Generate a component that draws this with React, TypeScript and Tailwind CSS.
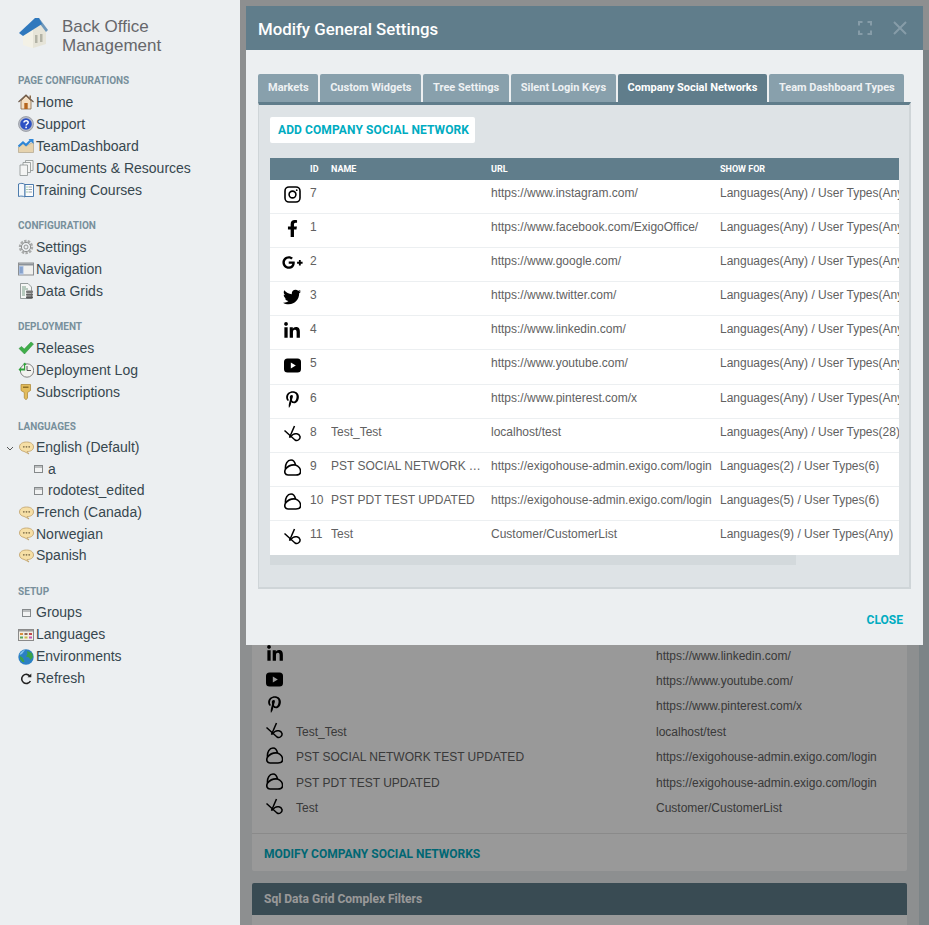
import React from 'react';
import { FaFacebookF, FaGooglePlusG, FaTwitter, FaLinkedinIn, FaPinterestP } from 'react-icons/fa';

const Logo = () => (
  <svg width="32" height="32" viewBox="0 0 32 32">
    <path d="M5 18 L22 7 L28 14 V27 L14 31 L5 28 Z" fill="#f3f1e6" />
    <path d="M15 31 L28 27 V14 L22 7 L15 12 Z" fill="#e6e4d8" />
    <rect x="17" y="18" width="2.5" height="8" fill="#b3b3a6" />
    <rect x="22" y="17" width="2.5" height="8" fill="#b3b3a6" />
    <path d="M21 1 L30 13 L28 15 L22 7 Z" fill="#6d97bb" />
    <path d="M1 16 L17 1 L21 1 L24 7 L5 19 Z" fill="#2f78bd" />
  </svg>
);

const HomeIcon = () => (
  <svg width="16" height="16" viewBox="0 0 16 16">
    <path d="M3 7 L8 2 L13 7 V15 H3 Z" fill="#f3dfc4" stroke="#8b6a4a" strokeWidth=".8" />
    <path d="M0.5 8 L8 1 L15.5 8" fill="none" stroke="#6d5a4a" strokeWidth="1.2" />
    <rect x="6.3" y="9" width="3.4" height="6" fill="#b5651d" />
    <rect x="11.5" y="1.5" width="1.5" height="3" fill="#8b6a4a" />
  </svg>
);
const SupportIcon = () => (
  <svg width="16" height="16" viewBox="0 0 16 16">
    <circle cx="8" cy="8" r="7.5" fill="#b9bdc6" stroke="#7d828c" strokeWidth=".6" />
    <circle cx="8" cy="8" r="5.8" fill="#2c50c4" />
    <path d="M6 6.4 C6 4.2 10.2 4.2 10.2 6.5 C10.2 8 8.1 8 8.1 9.6" fill="none" stroke="#fff" strokeWidth="1.5" />
    <rect x="7.3" y="10.6" width="1.6" height="1.6" fill="#fff" />
  </svg>
);
const DashIcon = () => (
  <svg width="16" height="16" viewBox="0 0 16 16">
    <path d="M0.5 9 L5 5.5 L8 8 L15.5 4 V14.5 H0.5 Z" fill="#e6d3ae" stroke="#a89a80" strokeWidth=".6" />
    <path d="M0.5 8.5 L5 4.5 L8 7 L12.5 2.8" fill="none" stroke="#2f86d6" strokeWidth="2.2" />
    <path d="M10.5 1 H15.5 V6 Z" fill="#2f86d6" />
  </svg>
);
const DocsIcon = () => (
  <svg width="16" height="16" viewBox="0 0 16 16" fill="#f4f5f4" stroke="#8d9392" strokeWidth=".8">
    <path d="M7.5 .5 H15 V10.5 H7.5 Z" />
    <path d="M5 2.5 H12.5 V12.5 H5 Z" />
    <path d="M2 5 H9.5 V15.5 H2 Z" />
  </svg>
);
const BookIcon = () => (
  <svg width="16" height="16" viewBox="0 0 16 16">
    <path d="M.5 2 C3 1 5 1.2 7 2.5 V15 C5 14 3 13.8 .5 14.5 Z" fill="#f3f7fb" stroke="#3a6ea5" strokeWidth=".9" />
    <path d="M7 2.5 H15.5 V14.5 H7 Z" fill="#fcfcfc" stroke="#3a6ea5" strokeWidth=".9" />
    <path d="M10.5 5 H14 M10.5 7.5 H14 M10.5 10 H14" stroke="#8a97a5" strokeWidth=".9" />
    <path d="M8.5 5 h1 M8.5 7.5 h1 M8.5 10 h1" stroke="#3f9d55" strokeWidth=".9" />
  </svg>
);
const GearIcon = () => (
  <svg width="16" height="16" viewBox="0 0 16 16">
    <circle cx="8" cy="8" r="5.9" fill="none" stroke="#a9abab" strokeWidth="2.6" strokeDasharray="2.4 1.2" />
    <circle cx="8" cy="8" r="4.6" fill="none" stroke="#8f9191" strokeWidth="1" />
    <circle cx="8" cy="8" r="2" fill="#eceff1" stroke="#777" strokeWidth=".7" />
  </svg>
);
const NavIcon = () => (
  <svg width="16" height="16" viewBox="0 0 16 16">
    <rect x=".5" y="2" width="15" height="12" fill="#f0f0ee" stroke="#8c8f92" />
    <rect x="1" y="2.5" width="14" height="2" fill="#8c9298" />
    <rect x="1" y="5" width="4.5" height="8.5" fill="#a9c0e3" />
    <path d="M1.8 7 h3 M1.8 9 h3 M1.8 11 h3" stroke="#5577aa" strokeWidth=".8" />
  </svg>
);
const GridIcon = () => (
  <svg width="16" height="16" viewBox="0 0 16 16">
    <path d="M2.5 .5 H10 L13.5 4 V15.5 H2.5 Z" fill="#f5f6f5" stroke="#7f8786" strokeWidth=".8" />
    <path d="M4 4 h4 M4 6 h6 M4 8 h3 M4 10 h3 M4 12 h3" stroke="#5b8c6c" strokeWidth=".8" />
    <rect x="8" y="7.5" width="7" height="2.5" rx="1" fill="#777" />
    <rect x="8" y="10.5" width="7" height="2.3" rx="1" fill="#666" />
    <rect x="8" y="13.2" width="7" height="2.3" rx="1" fill="#555" />
  </svg>
);
const CheckIcon = () => (
  <svg width="16" height="16" viewBox="0 0 16 16">
    <path d="M1 8.5 L3.5 6.5 L6.3 9 L13 2 L15.5 4 L6.5 14 Z" fill="#3fae49" stroke="#2c8a39" strokeWidth=".5" />
  </svg>
);
const LogIcon = () => (
  <svg width="16" height="16" viewBox="0 0 16 16">
    <circle cx="9" cy="8.5" r="6.7" fill="#f3f3f0" stroke="#777" strokeWidth=".9" />
    <path d="M9 4 V8.5 H13" fill="none" stroke="#444" strokeWidth=".9" />
    <path d="M.5 7.5 L3 5 V6.5 H6 V2.5 H4.5 L7 0.5 L8.5 3 H7.2 V8.5 H3 V10 Z" fill="#2fa23c" />
  </svg>
);
const KeyIcon = () => (
  <svg width="16" height="16" viewBox="0 0 16 16">
    <path d="M3 .5 H12.5 V6.5 L9.5 8.5 V14 L8 15.8 L6.3 14 V8.5 L3 6.5 Z" fill="#e3bc5b" stroke="#a9842f" strokeWidth=".7" />
    <rect x="5" y="2.5" width="5.5" height="1.5" fill="#8f7026" />
  </svg>
);
const BubbleIcon = () => (
  <svg width="15" height="14" viewBox="0 0 15 14">
    <path d="M7.5 1 C11.5 1 14.5 2.8 14.5 6 C14.5 9 11.5 10.6 8 10.6 L10 13 L5 10.4 C2.5 10 .5 8.4 .5 6 C.5 2.8 3.5 1 7.5 1 Z" fill="#f6dfa6" stroke="#bf9f68" strokeWidth=".8" />
    <circle cx="4.8" cy="5.8" r=".9" fill="#85744f" />
    <circle cx="7.5" cy="5.8" r=".9" fill="#85744f" />
    <circle cx="10.2" cy="5.8" r=".9" fill="#85744f" />
  </svg>
);
const BoxIcon = () => (
  <svg width="9" height="8" viewBox="0 0 9 8">
    <rect x=".5" y=".5" width="8" height="7" fill="#f2f3f3" stroke="#85898b" />
    <path d="M1 2 H8" stroke="#85898b" />
  </svg>
);
const LangIcon = () => (
  <svg width="16" height="16" viewBox="0 0 16 16">
    <rect x=".5" y="2.5" width="15" height="11" fill="#f1eee6" stroke="#8a8a8a" />
    <rect x="1" y="3" width="14" height="1.5" fill="#9a9a9a" />
    <rect x="2" y="6" width="3" height="2" fill="#d9903f" />
    <rect x="6.5" y="6" width="3" height="2" fill="#8c6b5b" />
    <rect x="11" y="6" width="3" height="2" fill="#c04a4a" />
    <rect x="2" y="9.5" width="3" height="2" fill="#57a55f" />
    <rect x="6.5" y="9.5" width="3" height="2" fill="#c9b84a" />
    <rect x="11" y="9.5" width="3" height="2" fill="#c45ab0" />
  </svg>
);
const GlobeIcon = () => (
  <svg width="16" height="16" viewBox="0 0 16 16">
    <circle cx="8" cy="8" r="7.7" fill="#2b80c4" />
    <path d="M9 2 L14 4 L15 8 L12.5 11 L11 8.5 L8 7.5 L9.5 5 Z" fill="#3aa24a" />
    <path d="M2 7 L5 9 L6.5 13 L4.5 13 L2 10 Z" fill="#3aa24a" />
    <path d="M1.5 6 A7 7 0 0 1 7 1 L4 5 Z" fill="#7fc0ee" />
  </svg>
);
const RefreshIcon = () => (
  <svg width="16" height="16" viewBox="0 0 16 16" fill="none">
    <path d="M12 5.2 A4.6 4.6 0 1 0 12.4 10" stroke="#222" strokeWidth="1.6" />
    <path d="M9.5 6.3 H13.3 V2.5 Z" fill="#222" />
  </svg>
);

const InstagramIcon = ({ size }: { size: number }) => (
  <svg width={size} height={size} viewBox="0 0 17 17" fill="none" stroke="#000">
    <rect x="1" y="1" width="15" height="15" rx="4" strokeWidth="1.6" />
    <circle cx="8.5" cy="8.5" r="3.4" strokeWidth="1.6" />
    <circle cx="12.7" cy="4.2" r=".9" fill="#000" stroke="none" />
  </svg>
);
const YoutubeIcon = ({ size }: { size: number }) => (
  <svg width={size} height={size} viewBox="0 0 17 17">
    <rect x="0" y="1.5" width="17" height="14" rx="3.5" fill="#000" />
    <path d="M6.8 5.5 L11.8 8.5 L6.8 11.5 Z" fill="#fff" />
  </svg>
);
const ScribbleIcon = ({ size }: { size: number }) => (
  <svg width={size} height={size} viewBox="0 0 17 17" fill="none" stroke="#000" strokeWidth="1.5">
    <path d="M.5 5.5 L11 15 C13.5 16.5 16.5 14 16 11.5 C15 8.5 11 8 9 9.5 L5.5 12.5" />
    <path d="M10.5 1 L5.5 12.5" />
  </svg>
);
const BlobIcon = ({ size }: { size: number }) => (
  <svg width={size} height={size} viewBox="0 0 17 17" fill="none" stroke="#000" strokeWidth="1.6">
    <path d="M4 16 C1 16 0 13 1.5 10 C1 5 3.5 1 7 1 C9.5 1 11 3.5 11.5 6 C14.5 7 17 10 16.5 13.5 C16 15.5 14 16 12 16 Z" />
    <path d="M1.5 10 C4 7 8 5.5 11.5 6" />
  </svg>
);

type IconC = React.FC<{ size: number }>;
const anyAny = 'Languages(Any) / User Types(Any)';
const rows: { icon: IconC; size: number; id: number; name: string; url: string; show: string; h: string }[] = [
  { icon: InstagramIcon, size: 17, id: 7, name: '', url: 'https://www.instagram.com/', show: anyAny, h: 'h-[34px]' },
  { icon: FaFacebookF, size: 17, id: 1, name: '', url: 'https://www.facebook.com/ExigoOffice/', show: anyAny, h: 'h-[34px]' },
  { icon: FaGooglePlusG, size: 21, id: 2, name: '', url: 'https://www.google.com/', show: anyAny, h: 'h-[34px]' },
  { icon: FaTwitter, size: 18, id: 3, name: '', url: 'https://www.twitter.com/', show: anyAny, h: 'h-[34px]' },
  { icon: FaLinkedinIn, size: 18, id: 4, name: '', url: 'https://www.linkedin.com/', show: anyAny, h: 'h-[34px]' },
  { icon: YoutubeIcon, size: 17, id: 5, name: '', url: 'https://www.youtube.com/', show: anyAny, h: 'h-[35px]' },
  { icon: FaPinterestP, size: 17, id: 6, name: '', url: 'https://www.pinterest.com/x', show: anyAny, h: 'h-[34px]' },
  { icon: ScribbleIcon, size: 17, id: 8, name: 'Test_Test', url: 'localhost/test', show: 'Languages(Any) / User Types(28)', h: 'h-[34px]' },
  { icon: BlobIcon, size: 17, id: 9, name: 'PST SOCIAL NETWORK TEST UPDATED', url: 'https://exigohouse-admin.exigo.com/login', show: 'Languages(2) / User Types(6)', h: 'h-[34px]' },
  { icon: BlobIcon, size: 17, id: 10, name: 'PST PDT TEST UPDATED', url: 'https://exigohouse-admin.exigo.com/login', show: 'Languages(5) / User Types(6)', h: 'h-[34px]' },
  { icon: ScribbleIcon, size: 17, id: 11, name: 'Test', url: 'Customer/CustomerList', show: 'Languages(9) / User Types(Any)', h: 'h-[34px]' },
];

const tabs = ['Markets', 'Custom Widgets', 'Tree Settings', 'Silent Login Keys', 'Company Social Networks', 'Team Dashboard Types'];

type NavItem = { label: string; icon: React.ReactNode; indent?: boolean; caret?: boolean };
const nav: { title: string; gap: string; rowH: string; items: NavItem[] }[] = [
  {
    title: 'PAGE CONFIGURATIONS',
    gap: 'mb-[17px]',
    rowH: 'h-[22px]',
    items: [
      { label: 'Home', icon: <HomeIcon /> },
      { label: 'Support', icon: <SupportIcon /> },
      { label: 'TeamDashboard', icon: <DashIcon /> },
      { label: 'Documents & Resources', icon: <DocsIcon /> },
      { label: 'Training Courses', icon: <BookIcon /> },
    ],
  },
  {
    title: 'CONFIGURATION',
    gap: 'mb-[17px]',
    rowH: 'h-[22px]',
    items: [
      { label: 'Settings', icon: <GearIcon /> },
      { label: 'Navigation', icon: <NavIcon /> },
      { label: 'Data Grids', icon: <GridIcon /> },
    ],
  },
  {
    title: 'DEPLOYMENT',
    gap: 'mb-[16px]',
    rowH: 'h-[22px]',
    items: [
      { label: 'Releases', icon: <CheckIcon /> },
      { label: 'Deployment Log', icon: <LogIcon /> },
      { label: 'Subscriptions', icon: <KeyIcon /> },
    ],
  },
  {
    title: 'LANGUAGES',
    gap: 'mb-[17px]',
    rowH: 'h-[21.6px]',
    items: [
      { label: 'English (Default)', icon: <BubbleIcon />, caret: true },
      { label: 'a', icon: <BoxIcon />, indent: true },
      { label: 'rodotest_edited', icon: <BoxIcon />, indent: true },
      { label: 'French (Canada)', icon: <BubbleIcon /> },
      { label: 'Norwegian', icon: <BubbleIcon /> },
      { label: 'Spanish', icon: <BubbleIcon /> },
    ],
  },
  {
    title: 'SETUP',
    gap: 'mb-[17px]',
    rowH: 'h-[22px]',
    items: [
      { label: 'Groups', icon: <BoxIcon /> },
      { label: 'Languages', icon: <LangIcon /> },
      { label: 'Environments', icon: <GlobeIcon /> },
      { label: 'Refresh', icon: <RefreshIcon /> },
    ],
  },
];

const Sidebar = () => (
  <aside className="relative z-20 w-[240px] h-full shrink-0 bg-[#eceff1] font-['Liberation_Sans',sans-serif]">
    <div className="flex pl-[18px] pt-[17px] h-[73px]">
      <Logo />
      <div className="ml-3 text-[17px] leading-[19px] text-[#66676b]">
        Back Office<br />Management
      </div>
    </div>
    {nav.map(section => (
      <div key={section.title} className={section.gap}>
        <div className="h-[18px] pl-[18px] font-['Roboto',sans-serif] text-[10px] font-bold leading-[15px] text-[#78909c]">
          {section.title}
        </div>
        {section.items.map(item => (
          <div
            key={item.label}
            className={`relative flex items-center text-[14px] text-[#37474f] ${section.rowH} ${item.indent ? 'pl-[30px]' : 'pl-[18px]'}`}
          >
            {item.caret && (
              <svg className="absolute left-[6px] top-[9px]" width="8" height="6" viewBox="0 0 8 6" fill="none" stroke="#555" strokeWidth="1">
                <path d="M1 1 L4 4 L7 1" />
              </svg>
            )}
            <span className="flex justify-center items-center w-[16px] h-[16px] mr-[2px]">{item.icon}</span>
            {item.label}
          </div>
        ))}
      </div>
    ))}
  </aside>
);

const BackgroundPage = () => (
  <main className="flex flex-1 h-full overflow-hidden bg-[#eceff1] font-['Liberation_Sans',sans-serif]">
    <div className="flex-1 pl-[12px] pr-[12px] pt-[400px]">
      <div className="bg-white rounded-[2px]">
        <div className="pt-[140px] h-[433px] pl-[14px]">
          {rows.map(row => {
            const Icon = row.icon;
            return (
              <div key={row.id} className="flex h-[25.4px] text-[12px] leading-[25px] text-[#616161]">
                <span className="w-[30px] h-[25px] flex items-center text-black"><Icon size={row.size} /></span>
                <span className="w-[360px] pt-[2px]">{row.name}</span>
                <span className="pt-[2px]">{row.url}</span>
              </div>
            );
          })}
        </div>
        <div className="h-[38px] border-t border-[#e6e6e6] pl-[12px] pt-[11px] font-['Roboto',sans-serif] text-[12px] font-bold text-[#00acc1]">
          MODIFY COMPANY SOCIAL NETWORKS
        </div>
      </div>
      <div className="mt-[12px] h-[32px] rounded-t-[2px] bg-[#607d8b] pl-[12px] font-['Roboto',sans-serif] text-[12px] font-bold leading-[32px] text-white">
        Sql Data Grid Complex Filters
      </div>
      <div className="h-[20px] bg-white" />
    </div>
    <div className="w-[10px] mt-[50px] bg-[#cfdce1]" />
  </main>
);

const SettingsModal = () => (
  <div className="absolute left-[246px] top-[6px] z-20 w-[677px] h-[639px] bg-[#eceff1]">
    <div className="flex items-center justify-between h-[44px] bg-[#607d8b] pl-[12px] pr-[16px]">
      <span className="pt-[3px] font-['Roboto',sans-serif] text-[16.8px] font-medium text-white">Modify General Settings</span>
      <div className="flex items-center gap-[21px]">
        <svg width="14" height="14" viewBox="0 0 14 14" fill="none" stroke="#869ca8" strokeWidth="2">
          <path d="M1 4.5 V1 H4.5 M9.5 1 H13 V4.5 M13 9.5 V13 H9.5 M4.5 13 H1 V9.5" />
        </svg>
        <svg width="14" height="14" viewBox="0 0 14 14" fill="none" stroke="#869ca8" strokeWidth="2">
          <path d="M1 1 L13 13 M13 1 L1 13" />
        </svg>
      </div>
    </div>
    <div className="px-[12px] pt-[24px]">
      <div className="flex gap-[2px] font-['Roboto',sans-serif] text-[11px] font-bold leading-[28px] whitespace-nowrap">
        {tabs.map(tab => (
          <div
            key={tab}
            className={`h-[28px] pl-[10px] pr-[9.5px] rounded-t-[2px] ${tab === 'Company Social Networks' ? 'bg-[#607d8b] text-white' : 'bg-[#88a0ac] text-[#eef1f3]'}`}
          >
            {tab}
          </div>
        ))}
      </div>
      <div className="w-[653px] h-[487px] border-t-[3px] border-t-[#607d8b] border-r-2 border-r-[#cfd5d8] border-b-2 border-b-[#cfd5d8] border-l border-l-[#cfd5d8] bg-[#dee3e6] pl-[11px] pt-[12px]">
        <div className="w-[205px] h-[26px] rounded-[2px] bg-white pl-[8px] font-['Roboto',sans-serif] text-[12px] font-bold leading-[26px] tracking-[.1px] text-[#00acc1]">
          ADD COMPANY SOCIAL NETWORK
        </div>
        <div className="mt-[15px] w-[629px] overflow-hidden">
          <div className="flex h-[22px] bg-[#607d8b] font-['Roboto',sans-serif] text-[9px] font-bold leading-[22px] text-white">
            <span className="w-[40px] shrink-0" />
            <span className="w-[21px] shrink-0">ID</span>
            <span className="w-[160px] shrink-0">NAME</span>
            <span className="w-[229px] shrink-0">URL</span>
            <span className="shrink-0">SHOW FOR</span>
          </div>
          {rows.map((row, i) => {
            const Icon = row.icon;
            return (
              <div
                key={row.id}
                className={`flex bg-white font-['Liberation_Sans',sans-serif] text-[12px] leading-[26px] text-[#616161] whitespace-nowrap ${row.h} ${i < rows.length - 1 ? 'border-b border-[#eceff1]' : ''}`}
              >
                <span className="w-[40px] h-full shrink-0 flex items-center justify-center pl-[4px] pb-[4px] text-black"><Icon size={row.size} /></span>
                <span className="w-[21px] shrink-0">{row.id}</span>
                <span className="w-[160px] shrink-0 pr-[9px] truncate">{row.name}</span>
                <span className="w-[229px] shrink-0">{row.url}</span>
                <span className="shrink-0">{row.show}</span>
              </div>
            );
          })}
          <div className="h-[10px] bg-[#dee3e6]">
            <div className="w-[526px] h-full bg-[#d3d9dc]" />
          </div>
        </div>
      </div>
    </div>
    <div className="pr-[20px] pt-[22px] text-right font-['Roboto',sans-serif] text-[12px] font-bold text-[#00acc1]">CLOSE</div>
  </div>
);

export default function App() {
  return (
    <div className="relative flex w-[929px] h-[925px] overflow-hidden">
      <Sidebar />
      <BackgroundPage />
      <div className="absolute left-[240px] top-0 right-0 bottom-0 z-10 bg-black/40" />
      <SettingsModal />
    </div>
  );
}
